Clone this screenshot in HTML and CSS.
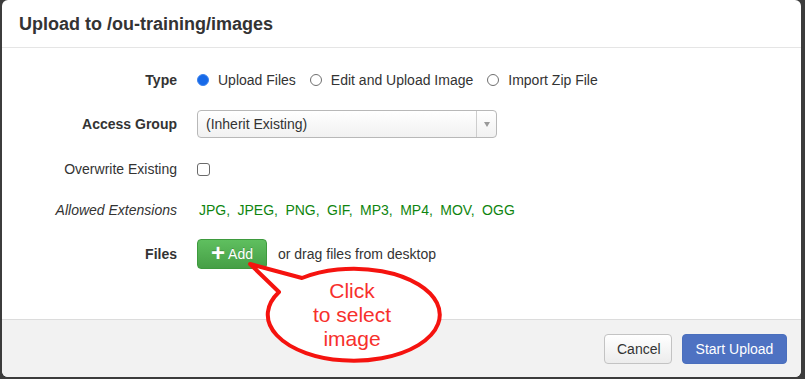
FILE: index.html
```html
<!DOCTYPE html>
<html lang="en">
<head>
  <meta charset="UTF-8" />
  <title>Upload to /ou-training/images</title>
  <link rel="stylesheet" href="styles.css">
</head>
<body>
  <!-- Upload dialog -->
  <div class="modal" role="dialog" aria-labelledby="uploadTitle">
    <div class="modal-header">
      <h3 id="uploadTitle">Upload to /ou-training/images</h3>
    </div>

    <div class="modal-body">
      <div class="row row-type">
        <label class="row-label bold">Type</label>
        <div class="row-field">
          <span class="radio checked"></span><span class="radio-text">Upload Files</span>
          <span class="radio"></span><span class="radio-text">Edit and Upload Image</span>
          <span class="radio"></span><span class="radio-text">Import Zip File</span>
        </div>
      </div>

      <div class="row row-group">
        <label class="row-label bold">Access Group</label>
        <div class="row-field">
          <div class="select">
            <span class="select-value">(Inherit Existing)</span>
            <span class="select-arrow"></span>
          </div>
        </div>
      </div>

      <div class="row row-overwrite">
        <label class="row-label">Overwrite Existing</label>
        <div class="row-field">
          <span class="checkbox"></span>
        </div>
      </div>

      <div class="row row-ext">
        <label class="row-label italic">Allowed Extensions</label>
        <div class="row-field ext-list">
          <span>JPG,</span><span>JPEG,</span><span>PNG,</span><span>GIF,</span><span>MP3,</span><span>MP4,</span><span>MOV,</span><span>OGG</span>
        </div>
      </div>

      <div class="row row-files">
        <label class="row-label bold">Files</label>
        <div class="row-field">
          <button class="btn-add"><span class="plus">+</span>Add</button>
          <span class="drag-hint">or drag files from desktop</span>
        </div>
      </div>
    </div>

    <div class="modal-footer">
      <button class="btn btn-cancel">Cancel</button>
      <button class="btn btn-primary">Start Upload</button>
    </div>

    <!-- Annotation callout drawn over the dialog -->
    <div class="callout">
      <svg width="212" height="122" viewBox="238 255 212 122">
        <path d="M302 278 L250 264 L279 292 A86 46 0 1 0 302 278 Z" fill="#fff" stroke="#f5130f" stroke-width="4" stroke-linejoin="round"/>
      </svg>
      <div class="callout-text">Click<br>to select<br>image</div>
    </div>
  </div>
</body>
</html>
```

FILE: styles.css
```css
* {
  margin: 0;
  padding: 0;
  box-sizing: border-box;
}
body {
  font-family: 'Liberation Sans', Arial, sans-serif;
  font-size: 14px;
  color: #333;
  background: #3c3c3c;
  height: 379px;
  overflow: hidden;
  padding: 0 4px 2px 2px;
}

/* Dialog shell */
.modal {
  position: relative;
  background: #fff;
  height: 377px;
  border-radius: 6px;
  overflow: hidden;
  display: flex;
  flex-direction: column;
}
.modal-header {
  height: 48px;
  border-bottom: 1px solid #e5e5e5;
  padding: 13px 17px 0;
}
.modal-header h3 {
  font-size: 18px;
  font-weight: 700;
  line-height: 22px;
  color: #333;
}

/* Form rows */
.modal-body {
  flex: 1;
  padding-top: 17px;
}
.row {
  display: flex;
  align-items: center;
  height: 30px;
}
.row-group { margin-top: 14px; }
.row-overwrite { margin-top: 15px; }
.row-ext { margin-top: 11px; }
.row-files { margin-top: 14px; }
.row-label {
  width: 175px;
  text-align: right;
  color: #333;
}
.row-label.bold { font-weight: 700; }
.row-label.italic { font-style: italic; }
.row-field {
  display: flex;
  align-items: center;
  margin-left: 20px;
}

/* Radios and checkbox */
.radio {
  width: 12px;
  height: 12px;
  border: 1px solid #6f6f6f;
  border-radius: 50%;
  margin-right: 9px;
}
.radio.checked {
  background: #1769e8;
  border-color: #3d84ee;
}
.radio-text { margin-right: 14px; }
.checkbox {
  width: 13px;
  height: 13px;
  border: 1px solid #6a6a6a;
  border-radius: 3px;
}

/* Select box */
.select {
  display: flex;
  align-items: center;
  width: 300px;
  height: 28px;
  border: 1px solid #b8b8b8;
  border-radius: 4px;
  background: linear-gradient(#fff, #f1f1f1);
}
.select-value {
  flex: 1;
  padding-left: 8px;
}
.select-arrow {
  position: relative;
  width: 20px;
  height: 100%;
  border-left: 1px solid #cdcdcd;
}
.select-arrow::after {
  content: "";
  position: absolute;
  left: 7px;
  top: 11px;
  border-left: 3px solid transparent;
  border-right: 3px solid transparent;
  border-top: 5px solid #999;
}

/* Extensions */
.ext-list {
  color: #0f850f;
  padding-left: 2px;
}
.ext-list span { margin-right: 7.4px; }

/* Add button */
.btn-add {
  display: flex;
  align-items: center;
  justify-content: center;
  width: 70px;
  height: 30px;
  font-family: inherit;
  font-size: 14px;
  color: #fff;
  border: 1px solid #3e9a3e;
  border-radius: 4px;
  background: linear-gradient(#5fbf5f, #469f46);
  text-shadow: 0 -1px 0 rgba(0, 0, 0, 0.2);
}
.plus {
  font-size: 24px;
  font-weight: 700;
  line-height: 14px;
  margin-right: 3px;
  margin-top: -2px;
}
.drag-hint { margin-left: 11px; }

/* Footer */
.modal-footer {
  display: flex;
  justify-content: flex-end;
  gap: 10px;
  height: 58px;
  padding: 14px 14px 14px 0;
  background: #f2f2f2;
  border-top: 1px solid #dcdcdc;
}
.btn {
  height: 30px;
  font-family: inherit;
  font-size: 14px;
  border-radius: 4px;
  padding: 0 12px;
}
.btn-cancel {
  width: 68px;
  color: #333;
  border: 1px solid #c3c3c3;
  background: linear-gradient(#fff, #ececec);
}
.btn-primary {
  width: 105px;
  color: #fff;
  border: 1px solid #4a6fbd;
  background: #4e72c2;
}

/* Callout annotation */
.callout {
  position: absolute;
  left: 236px;
  top: 255px;
  width: 212px;
  height: 122px;
}
.callout svg { display: block; }
.callout-text {
  position: absolute;
  left: 54px;
  top: 24px;
  width: 120px;
  text-align: center;
  font-size: 21px;
  line-height: 24px;
  color: #f7302c;
}
```
